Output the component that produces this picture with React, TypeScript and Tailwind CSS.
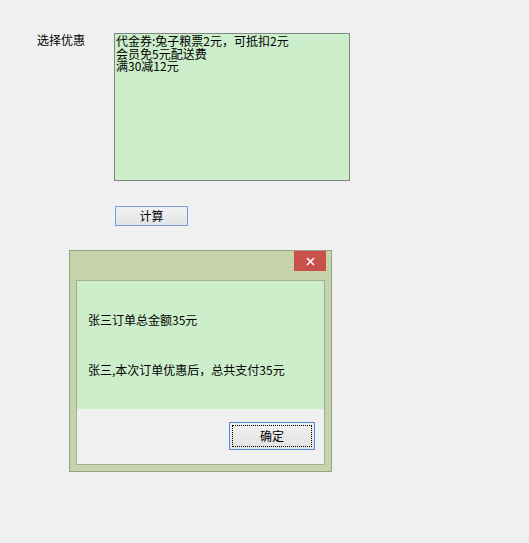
import React from 'react';

const font = { fontFamily: '"Noto Sans CJK SC", "Liberation Sans", sans-serif' };

export default function App() {
  return (
    <div className="relative w-[529px] h-[543px] bg-[#f0f0f0] text-[12px] text-black" style={font}>
      {/* Form */}
      <div className="flex pt-[33px]">
        <div className="w-[114px] pl-[37px] leading-[14px]">选择优惠</div>
        <div className="w-[236px] h-[148px] border border-[#7d8a84] bg-[#cdeecb] px-[1px] pt-[1px] leading-[12.6px]">
          <div className="h-[12.6px] overflow-visible">代金券:兔子粮票2元，可抵扣2元</div>
          <div className="h-[12.6px] overflow-visible">会员免5元配送费</div>
          <div className="h-[12.6px] overflow-visible">满30减12元</div>
        </div>
      </div>
      <div className="pl-[115px] pt-[25px]">
        <button className="w-[73px] h-[20px] border border-[#6fa0d8] bg-gradient-to-b from-[#f2f2f2] to-[#e3e3e3] leading-[18px] text-[12px] p-0">
          计算
        </button>
      </div>

      {/* Dialog window */}
      <div className="absolute left-[69px] top-[250px] w-[263px] h-[222px] border border-[#97a285] bg-[#c7d3ab] flex flex-col">
        <div className="h-[29px] flex justify-end pr-[5px]">
          <div className="w-[32px] h-[20px] bg-[#c9504c] flex items-center justify-center">
            <svg width="9" height="9" viewBox="0 0 9 9">
              <path d="M1 1 L8 8 M8 1 L1 8" stroke="#ffffff" strokeWidth="1.5" />
            </svg>
          </div>
        </div>
        <div className="mx-[6px] mb-[6px] flex-1 border border-[#a3af92] flex flex-col">
          <div className="h-[128px] bg-[#cdeecb] pl-[11px] pt-[31px]">
            <div className="leading-[16px]">张三订单总金额35元</div>
            <div className="leading-[16px] mt-[34px]">张三,本次订单优惠后，总共支付35元</div>
          </div>
          <div className="flex-1 bg-[#f0f0f0] flex justify-end items-start pr-[9px] pt-[13px]">
            <button className="w-[86px] h-[28px] border border-[#4d8ad0] bg-gradient-to-b from-[#f1f1f1] to-[#e2e2e2] p-[2px]">
              <div className="w-full h-full border border-dotted border-black flex items-center justify-center text-[12px]">
                确定
              </div>
            </button>
          </div>
        </div>
      </div>
    </div>
  );
}
